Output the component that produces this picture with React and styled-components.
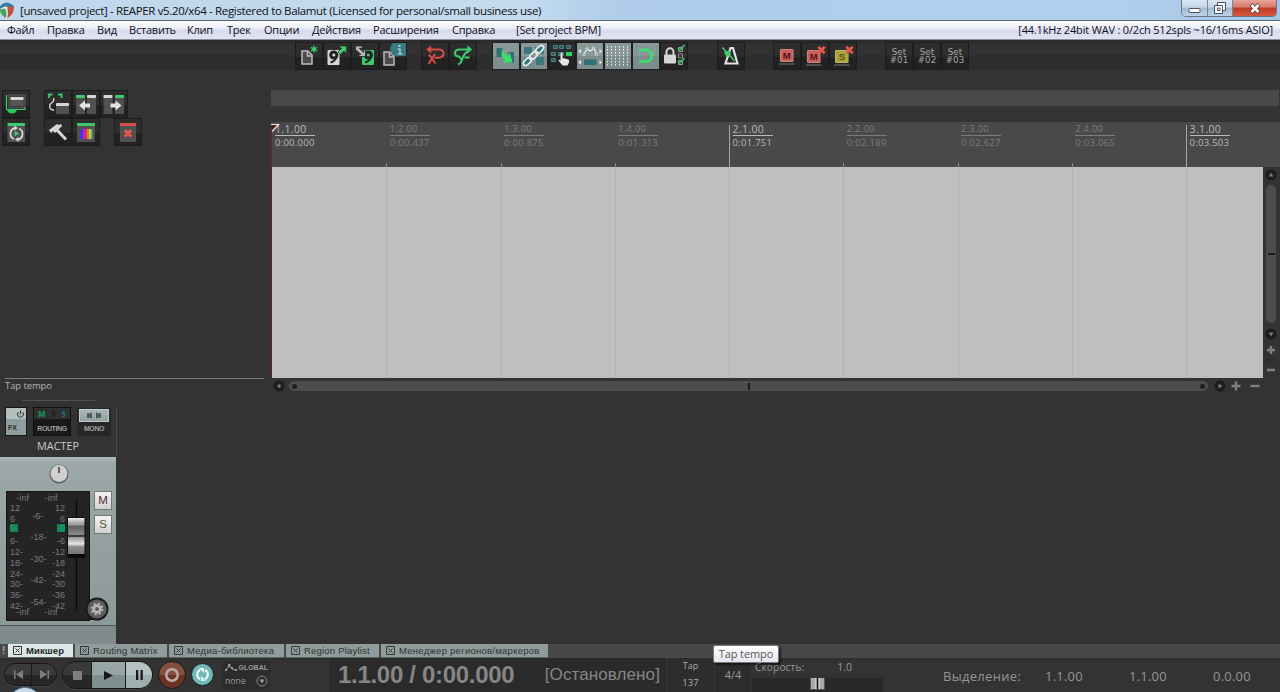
import React from 'react';
import styled, { createGlobalStyle } from 'styled-components';

const GlobalStyle = createGlobalStyle`
  * { box-sizing: border-box; }
  body {
    margin: 0;
    overflow: hidden;
    background: #333;
    font-family: "Open Sans", "Noto Sans", sans-serif;
  }
  svg { display: block; flex: none; }
`;

const Window = styled.div`
  position: relative;
  display: flex;
  flex-direction: column;
  width: 1280px;
  height: 692px;
  overflow: hidden;
  background: #333;
  white-space: nowrap;
`;

const Text = styled.span`
  font-family: ${p => p.$font || 'inherit'};
  font-size: ${p => p.$size || 10}px;
  font-weight: ${p => p.$weight || 400};
  letter-spacing: ${p => p.$track || 0}px;
  color: ${p => p.$color || '#9a9a9a'};
`;

/* title bar and menu */

const TitleBar = styled.div`
  display: flex;
  flex: none;
  height: 21px;
  padding-right: 3px;
  background: linear-gradient(90deg, #bfd6ec 0, #c3dbee 520px, #afcdea 620px, #b1d0ed 1100px, #a5c6e5 100%);
  border-bottom: 1px solid #5a6572;
`;

const TitleText = styled.div`
  flex: 1;
  padding-left: 5px;
  font-size: 11.5px;
  line-height: 21px;
  letter-spacing: -0.35px;
  color: #111;
`;

const WindowButtons = styled.div`
  display: flex;
  height: 17px;
  border: 1px solid #66778a;
  border-top: 0;
  border-radius: 0 0 5px 5px;
  overflow: hidden;
`;

const WindowButton = styled.div`
  display: flex;
  align-items: center;
  justify-content: center;
  width: ${p => p.$close ? 44 : 25}px;
  border-left: ${p => p.$first ? 0 : '1px solid #74869a'};
  background: ${p => p.$close
    ? 'linear-gradient(#e6a598 0, #d6796a 45%, #bd3a24 50%, #d4573c 100%)'
    : 'linear-gradient(#d9e6f2 0, #c5d7e8 45%, #a3bbd2 50%, #bcd2e6 100%)'};
`;

const MenuBar = styled.div`
  display: flex;
  flex: none;
  align-items: center;
  height: 19px;
  padding: 0 7px;
  background: linear-gradient(#fdfdfe 0, #eceef8 40%, #d7dbed 50%, #dfe3f3 100%);
  border-bottom: 1px solid #8d8f96;
`;

const MenuItem = styled.div`
  flex: none;
  width: ${p => p.$w ? `${p.$w}px` : 'auto'};
  font-size: 11px;
  letter-spacing: -0.22px;
  line-height: 18px;
  color: #101018;
`;

const AudioStatus = styled(MenuItem)`
  margin-left: auto;
  letter-spacing: -0.18px;
`;

/* toolbars */

const MainToolbar = styled.div`
  display: flex;
  flex: none;
  height: 50px;
  padding: 2px 0 0 295px;
  background: linear-gradient(#292929 0, #303030 3px, #333 14px, #2d2d2d 15px, #2d2d2d 29px, #333 31px);
`;

const Group = styled.div`
  display: flex;
  margin-right: ${p => p.$gap || 0}px;
`;

const ToolButton = styled.div`
  display: flex;
  flex: none;
  width: 28px;
  height: 28px;
  border: 1px solid ${p => p.$on ? '#1c2222' : '#1d1d1d'};
  background: ${p => p.$on
    ? 'linear-gradient(#8b9898 0 13px, #7e8c8c 13px)'
    : 'linear-gradient(#2d2d2d 0 14px, #222 14px)'};
  svg { margin: -1px; }
`;

const SetLabel = styled.div`
  width: 100%;
  padding-top: 5px;
  font-family: "DejaVu Sans", sans-serif;
  font-size: 8.7px;
  line-height: 8px;
  text-align: center;
  color: #a5a5a5;
`;

/* arrange area */

const Arrange = styled.div`
  display: flex;
  flex: none;
  height: 306px;
`;

const TrackPanel = styled.div`
  display: flex;
  flex-direction: column;
  width: 271px;
`;

const PanelTools = styled.div`
  display: flex;
  height: 28px;
  padding-left: 2px;
`;

const Hint = styled.div`
  width: 259px;
  margin: auto 0 0 5px;
  height: 18px;
  border-top: 1px solid #7b7b7b;
  font-size: 9.5px;
  line-height: 14px;
  letter-spacing: -0.1px;
  color: #b2b2b2;
`;

const Timeline = styled.div`
  display: flex;
  flex-direction: column;
  width: 1009px;
`;

const RegionLane = styled.div`
  height: 16px;
  width: 1008px;
  margin-bottom: 16px;
  background: #494949;
`;

const Ruler = styled.div`
  display: flex;
  position: relative;
  height: 45px;
  padding-left: 1px;
  overflow: hidden;
  background: #494949;
`;

const Beat = styled.div`
  flex: none;
  width: 114.25px;
  padding: 2px 0 0 ${p => p.$start ? 3 : 3.6}px;
  color: ${p => p.$bar ? '#b9b9b9' : '#7c7c7c'};
  background: linear-gradient(${p => p.$bar ? '#a5a5a5' : '#8a8a8a'}, ${p => p.$bar ? '#a5a5a5' : '#8a8a8a'}) no-repeat
    0 100% / ${p => p.$start ? 0 : 1}px ${p => p.$bar ? 42 : 4}px;
`;

const BeatBar = styled.div`
  width: 40px;
  height: 12px;
  border-bottom: 1px solid currentColor;
  font-size: ${p => p.$bar ? 10.5 : 9.2}px;
  line-height: ${p => p.$bar ? 11 : 9}px;
  letter-spacing: ${p => p.$bar ? 0.35 : 0.3}px;
`;

const BeatTime = styled.div`
  font-size: 9.5px;
  line-height: 13px;
  letter-spacing: 0.25px;
`;

const PlayMarker = styled.svg`
  position: absolute;
  left: 0;
  top: 1px;
`;

const Canvas = styled.div`
  display: flex;
  height: 211px;
`;

const Lanes = styled.div`
  display: flex;
  width: 992px;
  overflow: hidden;
  border-left: 1px solid #5c2626;
  background: #bec0bf;
`;

const Lane = styled.div`
  flex: none;
  width: 114.25px;
  border-left: ${p => p.$start ? 0 : '1px dotted #a2a4a3'};
`;

const VScroll = styled.div`
  display: flex;
  flex-direction: column;
  align-items: center;
  width: 17px;
  padding: 2px 1px 0 0;
`;

const VThumb = styled.div`
  display: flex;
  align-items: center;
  justify-content: center;
  width: 10px;
  height: 138px;
  margin: 4px 0 5px;
  border-radius: 5px;
  background: #4d4d4d;
  &::after { content: ''; width: 7px; height: 2px; background: #1c1c1c; }
`;

const HScroll = styled.div`
  display: flex;
  align-items: center;
  height: 16px;
  padding-left: 2px;
`;

const HThumb = styled.div`
  display: flex;
  align-items: center;
  justify-content: space-between;
  width: 919px;
  height: 10px;
  margin: 0 6px 0 4px;
  padding: 0 3px;
  border-radius: 5px;
  background: #4d4d4d;
`;

const Dot = styled.div`
  width: 5px;
  height: 5px;
  border-radius: 50%;
  background: #1e1e1e;
`;

const Grip = styled.div`
  width: 2px;
  height: 7px;
  background: #1c1c1c;
`;

/* mixer */

const Mixer = styled.div`
  display: flex;
  flex: none;
  height: 248px;
`;

const Strip = styled.div`
  display: flex;
  flex-direction: column;
  width: 117px;
`;

const StripHead = styled.div`
  height: 50px;
  margin-top: 11px;
  border-right: 1px solid #484848;
`;

const StripRule = styled.div`
  width: 73px;
  height: 1px;
  margin: -7px 0 6px 22px;
  background: #505050;
`;

const HeadButtons = styled.div`
  display: flex;
  align-items: flex-start;
  height: 30px;
  padding-left: 5px;
`;

const FxButton = styled.div`
  display: flex;
  flex-direction: column;
  width: 22px;
  height: 29px;
  margin-right: 6px;
  border: 1px solid #161616;
  background: linear-gradient(#b4c0c0 0 11px, #8f9e9f 11px);
`;

const FxTop = styled.div`
  display: flex;
  justify-content: flex-end;
  height: 13px;
  padding: 2px 1px 0 0;
`;

const RoutingButton = styled.div`
  width: 38px;
  height: 29px;
  margin-right: 6px;
  border: 1px solid #101010;
  background: linear-gradient(#303030 0 11px, #191919 11px);
`;

const RoutingTop = styled.div`
  display: flex;
  justify-content: space-between;
  height: 13px;
  padding: 0 4px;
  line-height: 11px;
`;

const MonoButton = styled.div`
  width: 34px;
  height: 28px;
  margin-top: 1px;
  padding: 1px 2px;
  background: #272727;
`;

const MonoFace = styled.div`
  display: flex;
  align-items: center;
  justify-content: center;
  height: 13px;
  background: linear-gradient(#a9b6b6, #94a2a2);
  border: 1px solid #c0caca;
`;

const ButtonCaption = styled.div`
  font-family: "Liberation Sans", sans-serif;
  font-size: 7px;
  font-weight: 700;
  letter-spacing: ${p => p.$left ? 0 : -0.4}px;
  line-height: ${p => p.$lh || 15}px;
  text-align: ${p => p.$left ? 'left' : 'center'};
  padding-left: ${p => p.$left ? 2 : 0}px;
  color: ${p => p.$dark ? '#242b2b' : '#a0a0a0'};
`;

const StripName = styled.div`
  font-size: 10.8px;
  line-height: 18px;
  text-align: center;
  color: #c9c9c9;
`;

const StripBody = styled.div`
  width: 116px;
  height: 169px;
  background: linear-gradient(#b0baba 0, #9ca7a7 6px, #939f9f 60%, #8e9a9a 100%);
  border-bottom: 1px solid #4f5858;
`;

const Pan = styled.div`
  display: flex;
  justify-content: center;
  height: 34px;
  padding: 6px 0 0 1px;
`;

const FaderRow = styled.div`
  display: flex;
  padding-left: 6px;
`;

const Meter = styled.div`
  display: flex;
  position: relative;
  width: 84px;
  height: 130px;
  border: 1px solid #151515;
  background: #242424;
  font-family: "Liberation Sans", sans-serif;
  font-size: 9px;
  color: #7b7b7b;
`;

const Scale = styled.div`
  display: flex;
  flex-direction: column;
  width: ${p => p.$w}px;
  text-align: ${p => p.$align || 'left'};
  padding-left: ${p => p.$pad || 0}px;
  line-height: ${p => p.$lh || 10.9}px;
`;

const InfMark = styled.div`
  height: ${p => p.$h || 11}px;
  line-height: 13px;
  letter-spacing: 0.2px;
  margin-top: ${p => p.$last ? -6 : 0}px;
  margin-left: ${p => p.$shift || 0}px;
  text-align: left;
`;

const Peak = styled.div`
  align-self: ${p => p.$right ? 'flex-end' : 'flex-start'};
  width: 8px;
  height: 8px;
  margin: -1px 0 4px;
  background: #138352;
  line-height: 9px;
  color: #1ea86d;
`;

const Fader = styled.svg`
  margin-left: 1px;
`;

const SideButtons = styled.div`
  display: flex;
  flex-direction: column;
  gap: 5px;
  margin-left: 4px;
`;

const SideButton = styled.div`
  width: 18px;
  height: 19px;
  border: 1px solid #6f7979;
  background: linear-gradient(#f2f2f2, #d2d2d2);
  font-family: "Liberation Sans", sans-serif;
  font-size: 11.5px;
  line-height: 17px;
  text-align: center;
  color: ${p => p.$color};
`;

const Gear = styled.svg`
  position: absolute;
  left: 77px;
  top: 102px;
`;

const StripFoot = styled.div`
  width: 116px;
  flex: 1;
  background: #7f8b8c;
`;

/* docker tabs */

const Tabs = styled.div`
  display: flex;
  flex: none;
  height: 14px;
  gap: 2px;
  background: #484848;
`;

const Bang = styled.div`
  width: 6px;
  padding-left: 2px;
  font: 700 10px/13px "Liberation Sans", sans-serif;
  color: #aaa;
`;

const Tab = styled.div`
  display: flex;
  align-items: center;
  gap: 4px;
  width: ${p => p.$w}px;
  padding-left: 5px;
  background: ${p => p.$active ? '#dfe7e6' : '#8f9c9b'};
  font-family: "Liberation Sans", sans-serif;
  font-size: 9.5px;
  font-weight: ${p => p.$active ? 700 : 400};
  letter-spacing: ${p => p.$track}px;
  color: ${p => p.$active ? '#202626' : '#2b3232'};
  border-bottom: 1px solid #5b6464;
`;

/* transport */

const Transport = styled.div`
  display: flex;
  flex: none;
  height: 34px;
  background: linear-gradient(#2e2e2e, #333 4px);
`;

const Pill = styled.div`
  display: flex;
  height: ${p => p.$h}px;
  margin: ${p => p.$m};
  border: 1px solid #151515;
  border-radius: 14px;
  overflow: hidden;
  box-shadow: 0 1px 0 #454545;
`;

const Key = styled.div`
  display: flex;
  align-items: center;
  justify-content: center;
  width: ${p => p.$w}px;
  background: ${p => p.$bg || 'linear-gradient(#3a3a3a 0 50%, #272727 50%)'};
  & + & { border-left: 1px solid #191919; }
`;

const RoundKey = styled.div`
  display: flex;
  align-items: center;
  justify-content: center;
  width: ${p => p.$d}px;
  height: ${p => p.$d}px;
  margin: ${p => p.$m};
  border: 1px solid #1b1b1b;
  border-radius: 50%;
  background: ${p => p.$bg};
`;

const GlobalBox = styled.div`
  width: 47px;
  height: 28px;
  margin: 3px 59px 0 9px;
  padding: 0 2px;
  background: #2c2c2c;
`;

const GlobalRow = styled.div`
  display: flex;
  align-items: center;
  justify-content: space-between;
  height: 13px;
`;

const Display = styled.div`
  display: flex;
  align-items: center;
  justify-content: space-between;
  width: 337px;
  padding: 0 6px 0 9px;
  background: #2b2b2b;
`;

const BigTime = styled.div`
  font: 700 24px/34px "Liberation Sans", sans-serif;
  letter-spacing: -0.3px;
  color: #868686;
`;

const Status = styled.div`
  font: 17px/34px "Liberation Sans", sans-serif;
  letter-spacing: 0.1px;
  color: #868686;
`;

const TapBox = styled.div`
  display: flex;
  flex-direction: column;
  width: 48px;
  border-left: 1px solid #363636;
  background: #2d2d2d;
  line-height: 16.5px;
  text-align: center;
`;

const Signature = styled.div`
  width: 37px;
  border-left: 1px solid #363636;
  background: #2d2d2d;
  font-size: 11px;
  line-height: 34px;
  text-align: center;
  color: #999;
`;

const Rate = styled.div`
  width: 131px;
  margin-left: 1px;
`;

const RateTop = styled.div`
  display: flex;
  justify-content: space-between;
  height: 20px;
  padding: 0 31px 0 3px;
  line-height: 19px;
`;

const RateTrack = styled.div`
  display: flex;
  justify-content: center;
  height: 14px;
  background: #292929;
`;

const Selection = styled.div`
  display: flex;
  margin-left: 60px;
  font-size: 13px;
  line-height: 36px;
  color: #969696;
`;

const SelCell = styled.div`
  width: ${p => p.$w}px;
  letter-spacing: ${p => p.$track || 0.2}px;
`;

const Tooltip = styled.div`
  position: absolute;
  left: 713px;
  top: 645px;
  width: 66px;
  height: 18px;
  border: 1px solid #777;
  border-radius: 2px;
  background: linear-gradient(#fff, #e5e6f0);
  box-shadow: 2px 2px 2px rgba(0, 0, 0, 0.5);
  font-size: 11px;
  line-height: 16px;
  letter-spacing: -0.1px;
  text-align: center;
  color: #555;
`;

const StartOrb = styled.div`
  position: absolute;
  left: 8px;
  top: 687px;
  width: 34px;
  height: 34px;
  border: 1px solid #51789c;
  border-radius: 50%;
  background: #c9dcec;
`;

/* drawings */

const GREEN = '#3ccb6c';
const TEAL = '#3d7d7d';
const PALE = '#d6d6d6';

const Page = ({ x, y }) => (
  <g stroke="#bdbdbd" strokeWidth="1.500">
    <path d={`M${x} ${y}h6l4 4v9h-10z`} fill="#4b4b4b" />
    <path d={`M${x + 5.5} ${y + 1}v4h4`} fill="none" />
  </g>
);

const Disk = ({ x, y, fill }) => (
  <g>
    <rect x={x} y={y} width="12" height="15" rx="1" fill={fill} />
    <circle cx={x + 6.3} cy={y + 5} r="4.6" fill="#222" />
    <circle cx={x + 6.3} cy={y + 5} r="1.6" fill={fill} />
    <path d={`M${x + 9} ${y + 7}q-1 4-6 5.500`} fill="none" stroke="#222" strokeWidth="2" />
  </g>
);

const Cross = ({ x, y, r = 3.2, w = 2.8, color = '#e5564f' }) => (
  <path d={`M${x - r} ${y - r}l${2 * r} ${2 * r}M${x + r} ${y - r}l${-2 * r} ${2 * r}`} stroke={color} strokeWidth={w} />
);

const Pane = ({ x, y, w, h, top }) => (
  <g>
    <rect x={x} y={y} width={w} height={h} fill="#505050" />
    <rect x={x} y={y} width={w} height="3" rx="1" fill={top} />
  </g>
);

const Badge = ({ color, text, ink, x = 0, y = 0 }) => (
  <g>
    <rect x={7 + x} y={7 + y} width="13.500" height="13" rx="1" fill={color} />
    <rect x={7.5 + x} y={7.5 + y} width="12.500" height="12" rx="1" fill="none" stroke="#fff" strokeOpacity=".2" />
    <path d={`M${6 + x} ${22 + y}h15.500`} stroke="#777" />
    <text x={13.8 + x} y={17 + y} textAnchor="middle" fontFamily="Liberation Sans, sans-serif" fontWeight="700" fontSize="9.500" fill={ink}>{text}</text>
  </g>
);

const ICONS = {
  fresh: (
    <g>
      <Page x={7} y={9} />
      <path d="M19 3.500v7M16 5.300l6 3.500M22 5.300l-6 3.500" stroke={GREEN} strokeWidth="1.400" />
    </g>
  ),
  open: (
    <g>
      <Disk x={4.5} y={8} fill={PALE} />
      <path d="M16 4h7.500v7.500l-2.500-2.500-3.500 3.500-2.500-2.500 3.500-3.500z" fill={GREEN} stroke="#222" strokeWidth=".6" />
    </g>
  ),
  save: (
    <g>
      <Disk x={11} y={8} fill={GREEN} />
      <path d="M4.500 4h7v2l-3 .5 4 4V8h2v6.500H8V12.500h2L5.500 8.500l-1 1z" fill="#b8b8b8" stroke="#222" strokeWidth=".8" />
    </g>
  ),
  info: (
    <g>
      <Page x={5} y={10} />
      <path d="M14 1h13v13h-6a7.500 7.500 0 0 1-7-13z" fill="#397a80" />
      <path d="M19.500 3h2v1.800h-2z" fill="#c6dede" />
      <path d="M18.500 7h2.500v5M18.500 12h5" fill="none" stroke="#c6dede" strokeWidth="1.200" />
    </g>
  ),
  undo: (
    <g fill="none" stroke="#dc4d4a" strokeWidth="2">
      <path d="M7 7.500h10.500q5 0 5 4t-5 4.200h-4" />
      <path d="M10 4l-4.500 3.500 4.500 3.500z" fill="#dc4d4a" strokeWidth=".5" />
      <path d="M8 12.500l6.500 9M14 12l-6.500 10" />
    </g>
  ),
  redo: (
    <g fill="none" stroke={GREEN} strokeWidth="2">
      <path d="M21 7.500H10.500q-4.500 0-4.500 3.500t4 3.500l2.500 3M19 9.500q-4 2-5.500 7t-4.500 6M15.500 15.500h5" />
      <path d="M18.500 4l4.500 3.500-4.500 3.500z" fill={GREEN} strokeWidth=".5" />
    </g>
  ),
  ripple: (
    <g>
      <path d="M4.500 6h6v9h-6zM16 10h6v11h-6z" fill="#2f7174" />
      <path d="M10 7l2.500 5 3.500 2 1.500-4 3 10.500H10.500l3-2.500-4-4z" fill="#35e36b" />
    </g>
  ),
  chain: (
    <g>
      <path d="M4 5h8v7H4zM15 5h9v7h-9zM4 16h7v7H4zM16 15h8v8h-8z" fill="#38777a" />
      <g fill="none" stroke="#e6ebeb" strokeWidth="1.800">
        <ellipse cx="7.500" cy="19.500" rx="5" ry="2.600" transform="rotate(-45 7.500 19.500)" />
        <ellipse cx="13.500" cy="13.500" rx="5" ry="2.600" transform="rotate(-45 13.500 13.500)" />
        <ellipse cx="19.500" cy="7.500" rx="5" ry="2.600" transform="rotate(-45 19.500 7.500)" />
      </g>
    </g>
  ),
  group: (
    <g>
      <path
        d="M5.500 3.500h4v3h-4zM11.500 3.500h4v3h-4zM18.500 3.500h4v3h-4zM3.500 10.500h4v3h-4zM10.500 10.500h5v3h-5zM3.500 16.500h4v3h-4z"
        fill="#2f5c60" stroke="#4f8083"
      />
      <path d="M18 10h6v4h-6z" fill="#2dd465" />
      <path d="M12.500 11q1.500-1 2 0v5l6 1.500q1 .6.5 3l-1.500 3h-5l-4-5q0-1.500 2 0z" fill="#e4e4e4" />
    </g>
  ),
  envelope: (
    <g>
      <path d="M8 12l3-5 3.500 2L18 6l2.500 6" fill="none" stroke="#e9eeee" strokeWidth="1.200" />
      <g fill={TEAL} stroke="#e9eeee" strokeWidth=".9">
        <circle cx="8" cy="12.500" r="1.200" />
        <circle cx="11" cy="7" r="1.200" />
        <circle cx="17.500" cy="6" r="1.200" />
        <circle cx="20.500" cy="12.500" r="1.200" />
      </g>
      <path d="M5 7v4.500L2.300 9.300zM23.500 7v4.500l2.500-2.200zM5 18v4.500l-2.700-2.200zM23.500 18v4.500l2.500-2.200z" fill="#e9eeee" />
      <path d="M8 17.500h12.500v5.500H8z" fill="#2f7174" />
    </g>
  ),
  grid: (
    <path d="M3.500 4v21M7.500 4v21M11.500 4v21M15.500 4v21M19.500 4v21M23.500 4v21" stroke="#e8eded" strokeDasharray="1.500 1.500" />
  ),
  snap: (
    <g fill="none">
      <path d="M4.500 4v21M9.500 4v21M14.500 4v21M19.500 4v21M24.500 4v21" stroke="#5d9490" strokeDasharray="1.500 1.500" />
      <path d="M7 8h8a5.800 5.800 0 0 1 0 11.500H7" stroke="#36e36c" strokeWidth="2.600" />
    </g>
  ),
  lock: (
    <g fill="none">
      <path d="M6.500 13V10a3.500 3.800 0 0 1 7 0v3" stroke={PALE} strokeWidth="2" />
      <rect x="4" y="12.500" width="12" height="9" rx="1" fill={PALE} />
      <path d="M18.500 5.500h4v4h-4zM18.500 12h4v4h-4zM18.500 18.500h4v4h-4z" stroke="#999" />
      <path d="M18 6l2 2 4.500-5M18 19l2 2 4.500-5" stroke={GREEN} strokeWidth="1.500" />
    </g>
  ),
  metronome: (
    <g fill="none">
      <path d="M13.500 6h2.500l4.500 15.500H8.500z" stroke="#e2e2e2" strokeWidth="2.200" />
      <path d="M5.500 5.500l12 13.500" stroke={GREEN} strokeWidth="1.600" />
      <path d="M7 10l5.500-1.500 1.500 4-4.500 2.500z" fill={GREEN} />
    </g>
  ),
  mute: <Badge color="#c5615f" text="M" ink="#5a1010" />,
  muteOff: (
    <g>
      <Badge color="#c5615f" text="M" ink="#5a1010" y={1} x={-1} />
      <Cross x={20.5} y={8} />
    </g>
  ),
  soloOff: (
    <g>
      <Badge color="#aaa540" text="S" ink="#55500a" y={1} x={-1} />
      <Cross x={20.5} y={8} />
    </g>
  ),
  master: (
    <g>
      <rect x="7" y="5" width="16" height="13" fill="#3a3a3a" stroke="#5d5d5d" />
      <path d="M8.500 7h13v3h-13z" fill={PALE} />
      <path d="M8.500 10h13v6h-13z" fill="#555" />
      <path d="M4.500 5v14.500h18.500v-2" fill="none" stroke={GREEN} strokeWidth="1.200" />
      <path d="M5 19.500h10q-1 4-5 4t-5-4z" fill="#25c75a" />
    </g>
  ),
  route: (
    <g>
      <path d="M5 8V4.500h3.500M14 4.500h3.500V8" fill="none" stroke={GREEN} strokeWidth="1.800" />
      <path d="M9.500 8q1 3-2 5t-1 6l3.500 1.500" fill="none" stroke={PALE} strokeWidth="1.400" />
      <Pane x={12} y={13} w={13} h={11} top={PALE} />
    </g>
  ),
  left: (
    <g>
      <Pane x={4} y={5} w={9} h={19} top={GREEN} />
      <Pane x={15} y={5} w={9} h={19} top={PALE} />
      <path d="M7 15.500l6-5v3h5v4h-5v3z" fill="#e3e3e3" />
    </g>
  ),
  right: (
    <g>
      <Pane x={3.5} y={5} w={9} h={19} top={PALE} />
      <Pane x={15} y={5} w={9} h={19} top={GREEN} />
      <path d="M21.500 15.500l-6-5v3h-5v4h5v3z" fill="#e3e3e3" />
    </g>
  ),
  cycle: (
    <g>
      <Pane x={5.5} y={5} w={17.5} h={19} top={GREEN} />
      <path d="M13 10a5.800 5.800 0 0 0-1 11M16 21.500a5.800 5.800 0 0 0 1-11" fill="none" stroke={PALE} strokeWidth="1.800" />
      <path d="M12.500 7.500l3.500 2.500-3.500 2.500zM16.500 24l-3.500-2.500 3.500-2.500z" fill={PALE} />
      <path d="M12.500 12.500l4.500 3-4.500 3z" fill={GREEN} />
    </g>
  ),
  hammer: (
    <g>
      <path d="M13 12l9 9.500" stroke={PALE} strokeWidth="3" />
      <path d="M5 12l8-6 2 1 2-1 1 2-7 7-2-2-2 2z" fill={PALE} />
    </g>
  ),
  palette: (
    <g>
      <Pane x={5} y={5} w={18} h={19} top={GREEN} />
      <path d="M8 11h3v10H8z" fill="#4a35d5" />
      <path d="M11 11h2v10h-2z" fill="#a12bd0" />
      <path d="M13 11h2v10h-2z" fill="#e52b67" />
      <path d="M15 11h2v10h-2z" fill="#ef7e20" />
      <path d="M17 11h2v10h-2z" fill="#d3c625" />
      <path d="M19 11h1.500v10h-1.500z" fill="#35b8a0" />
    </g>
  ),
  remove: (
    <g>
      <Pane x={6} y={5} w={16} h={19} top="#d8504b" />
      <Cross x={14} y={15.5} />
    </g>
  )
};

const Tool = ({ icon, on }) => (
  <ToolButton $on={on}>
    <svg width="28" height="28" viewBox="0 0 28 28">{ICONS[icon]}</svg>
  </ToolButton>
);

const Tools = ({ names, active = [], gap }) => (
  <Group $gap={gap}>
    {names.map(name => <Tool key={name} icon={name} on={active.includes(name)} />)}
  </Group>
);

const ScrollArrow = ({ turn }) => (
  <svg width="12" height="12" viewBox="0 0 12 12">
    <circle cx="6" cy="6" r="5.500" fill="#1c1c1c" />
    <path d="M4.500 3.500l4 2.500-4 2.500z" fill="#777" transform={`rotate(${turn} 6 6)`} />
  </svg>
);

const ZoomMark = ({ plus }) => (
  <svg width="10" height="10" viewBox="0 0 10 10">
    <path d={plus ? 'M.5 5h9M5 .5v9' : 'M.5 5h9'} stroke="#808080" strokeWidth="2.400" />
  </svg>
);

const TabBox = () => (
  <svg width="9" height="9" viewBox="0 0 9 9">
    <path d="M.5.5h8v8h-8zM2.500 2.500l4 4M6.500 2.500l-4 4" fill="none" stroke="#303838" />
  </svg>
);

const BEATS = [
  ['1.1.00', '0:00.000'], ['1.2.00', '0:00.437'], ['1.3.00', '0:00.875'],
  ['1.4.00', '0:01.313'], ['2.1.00', '0:01.751'], ['2.2.00', '0:02.189'],
  ['2.3.00', '0:02.627'], ['2.4.00', '0:03.065'], ['3.1.00', '0:03.503']
];

const MENU = [
  ['Файл', 40], ['Правка', 50], ['Вид', 32], ['Вставить', 58], ['Клип', 40], ['Трек', 37],
  ['Опции', 48], ['Действия', 61], ['Расширения', 79], ['Справка', 64], ['[Set project BPM]']
];

const TABS = [
  ['Микшер', 65, 0.1], ['Routing Matrix', 92, 0.25], ['Медиа-библиотека', 115, 0.25],
  ['Region Playlist', 93, 0.2], ['Менеджер регионов/маркеров', 167, 0.26]
];

export default function App() {
  return (
    <Window>
      <GlobalStyle />
      <TitleBar>
        <svg width="15" height="20" viewBox="0 0 15 20">
          <path d="M0 5Q7-1 14 7q0 9-7 12Q1 16 0 11z" fill="#ececec" />
          <path d="M0 6Q6-1 14 6l-2 3Q6 4 0 9z" fill="#397c9d" />
          <path d="M7 7.500q4-2 7-.5 0 8-7 11.500 2-5 0-11z" fill="#bf4f43" />
          <path d="M0 9.500l5-1q3 5 .5 9.500Q1 15 0 11z" fill="#46a45a" />
        </svg>
        <TitleText>[unsaved project] - REAPER v5.20/x64 - Registered to Balamut (Licensed for personal/small business use)</TitleText>
        <WindowButtons>
          <WindowButton $first>
            <svg width="13" height="11"><rect x="1" y="5.500" width="11" height="4" rx="1" fill="#fff" stroke="#4a5260" /></svg>
          </WindowButton>
          <WindowButton>
            <svg width="12" height="12" fill="#fff" stroke="#4a5260">
              <path d="M3.500.5h8v8h-8z" />
              <path d="M.5 3.500h8v8h-8z" />
              <path d="M3.500 6h2.500v2.500h-2.500z" />
            </svg>
          </WindowButton>
          <WindowButton $close>
            <svg width="12" height="11">
              <path d="M2 1.500l8 8M10 1.500l-8 8" stroke="#5b4444" strokeWidth="4" />
              <path d="M2.500 2l7 7M9.500 2l-7 7" stroke="#fff" strokeWidth="2.500" />
            </svg>
          </WindowButton>
        </WindowButtons>
      </TitleBar>
      <MenuBar>
        {MENU.map(([label, w]) => <MenuItem key={label} $w={w}>{label}</MenuItem>)}
        <AudioStatus>[44.1kHz 24bit WAV : 0/2ch 512spls ~16/16ms ASIO]</AudioStatus>
      </MenuBar>

      <MainToolbar>
        <Tools names={['fresh', 'open', 'save', 'info']} gap={14} />
        <Tools names={['undo', 'redo']} gap={15} />
        <Tools
          names={['ripple', 'chain', 'group', 'envelope', 'grid', 'snap', 'lock']}
          active={['ripple', 'chain', 'envelope', 'grid', 'snap']}
          gap={29}
        />
        <Tools names={['metronome']} gap={28} />
        <Tools names={['mute', 'muteOff', 'soloOff']} gap={28} />
        <Group>
          {['#01', '#02', '#03'].map(n => (
            <ToolButton key={n}><SetLabel>Set<br />{n}</SetLabel></ToolButton>
          ))}
        </Group>
      </MainToolbar>

      <Arrange>
        <TrackPanel>
          <PanelTools>
            <Tools names={['master']} gap={14} />
            <Tools names={['route', 'left', 'right']} />
          </PanelTools>
          <PanelTools>
            <Tools names={['cycle']} gap={14} />
            <Tools names={['hammer', 'palette']} gap={14} />
            <Tools names={['remove']} />
          </PanelTools>
          <Hint>Tap tempo</Hint>
        </TrackPanel>
        <Timeline>
          <RegionLane />
          <Ruler>
            {BEATS.map(([bar, time], i) => (
              <Beat key={bar} $bar={i % 4 === 0} $start={i === 0}>
                <BeatBar $bar={i % 4 === 0}>{bar}</BeatBar>
                <BeatTime>{time}</BeatTime>
              </Beat>
            ))}
            <PlayMarker width="9" height="44" viewBox="0 0 9 44">
              <path d="M.5 5v39" stroke="#6b2222" />
              <path d="M0 1h8L1 9z" fill="#4b1d1d" />
              <path d="M0 1.500h7.500L1 8.500" fill="none" stroke="#eee" strokeWidth="1.200" />
            </PlayMarker>
          </Ruler>
          <Canvas>
            <Lanes>
              {BEATS.map(([bar], i) => <Lane key={bar} $start={i === 0} />)}
            </Lanes>
            <VScroll>
              <ScrollArrow turn={-90} />
              <VThumb />
              <ScrollArrow turn={90} />
              <svg width="10" height="36" viewBox="0 0 10 36" stroke="#808080" strokeWidth="2.400">
                <path d="M1 10h8M5 6v8M1 30h8" />
                <path d="M1 20h8" stroke="#222" strokeWidth="1" />
              </svg>
            </VScroll>
          </Canvas>
          <HScroll>
            <ScrollArrow turn={180} />
            <HThumb><Dot /><Grip /><Dot /></HThumb>
            <Group $gap={5}><ScrollArrow turn={0} /></Group>
            <Group $gap={9}><ZoomMark plus /></Group>
            <ZoomMark />
          </HScroll>
        </Timeline>
      </Arrange>

      <Mixer>
        <Strip>
          <StripHead>
            <StripRule />
            <HeadButtons>
              <FxButton>
                <FxTop>
                  <svg width="9" height="9" viewBox="0 0 9 9" fill="none" stroke="#2b3333">
                    <path d="M2.500 2a3 3 0 1 0 4 0M4.500.5v4" />
                  </svg>
                </FxTop>
                <ButtonCaption $left $dark>FX</ButtonCaption>
              </FxButton>
              <RoutingButton>
                <RoutingTop>
                  <Text $size={8} $weight={700} $color="#169a58">M</Text>
                  <Text $size={8} $weight={700} $color="#1f1f1f">R</Text>
                  <Text $size={8} $weight={700} $color="#1b7393">S</Text>
                </RoutingTop>
                <ButtonCaption>ROUTING</ButtonCaption>
              </RoutingButton>
              <MonoButton>
                <MonoFace>
                  <svg width="16" height="9" viewBox="0 0 16 9" fill="#4f5b5b">
                    <path d="M1 2h2v5H1zM3 3l3-2v7l-3-2zM15 2h-2v5h2zM13 3l-3-2v7l3-2z" />
                  </svg>
                </MonoFace>
                <ButtonCaption $lh={14}>MONO</ButtonCaption>
              </MonoButton>
            </HeadButtons>
            <StripName>МАСТЕР</StripName>
          </StripHead>
          <StripBody>
            <Pan>
              <svg width="20" height="21" viewBox="0 0 20 21">
                <circle cx="10" cy="11" r="9.500" fill="#59605f" />
                <circle cx="10" cy="10.500" r="8.500" fill="#d0d0d0" />
                <path d="M10 4v6" stroke="#222" strokeWidth="1.300" />
              </svg>
            </Pan>
            <FaderRow>
              <Meter>
                <Scale $w={21} $pad={3}>
                  <InfMark $shift={6}>-inf</InfMark>
                  <div>12</div>
                  <div>6</div>
                  <Peak>0-</Peak>
                  {[6, 12, 18, 24, 30, 36, 42].map(n => <div key={n}>{n}-</div>)}
                  <InfMark $last $shift={6}>-inf</InfMark>
                </Scale>
                <Scale $w={19} $pad={2.5} $lh={21.6}>
                  <InfMark $h={13.5} />
                  {[6, 18, 30, 42, 54].map(n => (
                    <Text key={n} $size={9} $color="#7b7b7b" as="div">{n < 10 && <>&thinsp;</>}-{n}-</Text>
                  ))}
                </Scale>
                <Scale $w={18} $align="right">
                  <InfMark $shift={-2.5}>-inf</InfMark>
                  <div>12</div>
                  <div>6</div>
                  <Peak $right>-0</Peak>
                  {[6, 12, 18, 24, 30, 36, 42].map(n => <div key={n}>-{n}</div>)}
                  <InfMark $last $shift={-2.5}>-inf</InfMark>
                </Scale>
                <Fader width="20" height="126" viewBox="0 0 20 126">
                  <defs>
                    <linearGradient id="cap" x1="0" y1="0" x2="0" y2="1">
                      <stop offset="0" stopColor="#eee" />
                      <stop offset=".12" stopColor="#b0b0b0" />
                      <stop offset=".2" stopColor="#999" />
                      <stop offset=".22" stopColor="#5c5c5c" />
                      <stop offset=".46" stopColor="#8a8a8a" />
                      <stop offset=".5" stopColor="#111" />
                      <stop offset=".54" stopColor="#999" />
                      <stop offset=".72" stopColor="#e6e6e6" />
                      <stop offset=".8" stopColor="#8c8c8c" />
                      <stop offset="1" stopColor="#777" />
                    </linearGradient>
                  </defs>
                  <path d="M10.500 8v111" stroke="#080808" strokeWidth="1.200" />
                  <rect x="1" y="25" width="18.500" height="41" rx="2" fill="#0b0b0b" />
                  <rect x="2" y="26" width="16.500" height="36" fill="url(#cap)" />
                </Fader>
                <Gear width="26" height="28" viewBox="0 0 26 28">
                  <path d="M6 0v8q0-1 7-4v22H6z" fill="#1b1b1b" />
                  <circle cx="13" cy="15" r="11.500" fill="#1b1b1b" />
                  <circle cx="13" cy="15" r="9.500" fill="#5e5e5e" />
                  <circle cx="13" cy="15" r="3.300" fill="none" stroke="#b8b8b8" strokeWidth="2.500" />
                  <circle cx="13" cy="15" r="5.300" fill="none" stroke="#b8b8b8" strokeWidth="2" strokeDasharray="2.080 2.080" />
                </Gear>
              </Meter>
              <SideButtons>
                <SideButton $color="#572c2c">M</SideButton>
                <SideButton $color="#54511c">S</SideButton>
              </SideButtons>
            </FaderRow>
          </StripBody>
          <StripFoot />
        </Strip>
      </Mixer>

      <Tabs>
        <Bang>!</Bang>
        {TABS.map(([label, w, track], i) => (
          <Tab key={label} $w={w} $track={track} $active={i === 0}><TabBox />{label}</Tab>
        ))}
      </Tabs>

      <Transport>
        <Pill $h={23} $m="5px 5px 0 4px">
          <Key $w={26}>
            <svg width="11" height="9" fill="#7d7d7d"><path d="M1 0h1.500v9H1zM10 0v9L3 4.500z" /></svg>
          </Key>
          <Key $w={25}>
            <svg width="11" height="9" fill="#7d7d7d"><path d="M8.500 0H10v9H8.500zM1 0v9l7-4.500z" /></svg>
          </Key>
        </Pill>
        <Pill $h={28} $m="3px 5px 0 0">
          <Key $w={28}><svg width="9" height="9"><path d="M0 0h9v9H0z" fill="#7d7d7d" /></svg></Key>
          <Key $w={34} $bg="linear-gradient(#97a5a5 0 50%, #7f8e8e 50%)">
            <svg width="9" height="9"><path d="M0 0l9 4.500L0 9z" fill="#161616" /></svg>
          </Key>
          <Key $w={27} $bg="linear-gradient(#b5c0c0 0 50%, #a1aeae 50%)">
            <svg width="7" height="10"><path d="M0 0h2.300v10H0zM4.500 0h2.300v10H4.500z" fill="#1b1b1b" /></svg>
          </Key>
        </Pill>
        <RoundKey $d={28} $m="3px 5px 0 0" $bg="linear-gradient(#85503f 0 50%, #6b3325 50%)">
          <svg width="16" height="16"><circle cx="8" cy="8" r="5.700" fill="none" stroke="#bcaaa6" strokeWidth="2.600" /></svg>
        </RoundKey>
        <RoundKey $d={23} $m="5px 0 0" $bg="#70b9b8">
          <svg width="15" height="15" viewBox="0 0 15 15">
            <path d="M5 12A5 5 0 0 1 5 3M10 3a5 5 0 0 1 0 9" fill="none" stroke="#f0f6f6" strokeWidth="2" />
            <path d="M4 1h5v5zM11 14H6V9z" fill="#f0f6f6" />
          </svg>
        </RoundKey>
        <GlobalBox>
          <GlobalRow>
            <svg width="12" height="9" viewBox="0 0 12 9">
              <path d="M1 7l3-4 3 3 4 1" fill="none" stroke="#9b9b9b" />
              <path d="M0 6h2v2H0zM3 1h2.500v2.500H3zM6 4h2v2H6zM10 6h2v2h-2z" fill="#9b9b9b" />
            </svg>
            <Text $font='"Liberation Sans"' $size={7} $weight={700}>GLOBAL</Text>
          </GlobalRow>
          <GlobalRow>
            <Text $size={8.7}>none</Text>
            <svg width="12" height="12" viewBox="0 0 12 12">
              <circle cx="6" cy="6" r="5" fill="none" stroke="#888" />
              <path d="M3.500 4.500h5L6 8.500z" fill="#999" />
            </svg>
          </GlobalRow>
        </GlobalBox>
        <Display>
          <BigTime>1.1.00 / 0:00.000</BigTime>
          <Status>[Остановлено]</Status>
        </Display>
        <TapBox>
          <Text $size={9} $color="#aaa">Tap</Text>
          <Text $size={9.5} $color="#aaa">137</Text>
        </TapBox>
        <Signature>4/4</Signature>
        <Rate>
          <RateTop>
            <Text $size={10} $track={0.2}>Скорость:</Text>
            <Text $size={10.5}>1.0</Text>
          </RateTop>
          <RateTrack>
            <svg width="15" height="13">
              <rect x=".5" y="-1" width="14" height="12.500" fill="#a9a9a9" stroke="#555" />
              <path d="M5.500 0v11M9.500 0v11" stroke="#ccc" />
              <path d="M7.500 0v11" stroke="#111" strokeWidth="1.200" />
            </svg>
          </RateTrack>
        </Rate>
        <Selection>
          <SelCell $w={102} $track={0.3}>Выделение:</SelCell>
          <SelCell $w={84}>1.1.00</SelCell>
          <SelCell $w={84}>1.1.00</SelCell>
          <SelCell $w={50}>0.0.00</SelCell>
        </Selection>
      </Transport>

      <Tooltip>Tap tempo</Tooltip>
      <StartOrb />
    </Window>
  );
}
